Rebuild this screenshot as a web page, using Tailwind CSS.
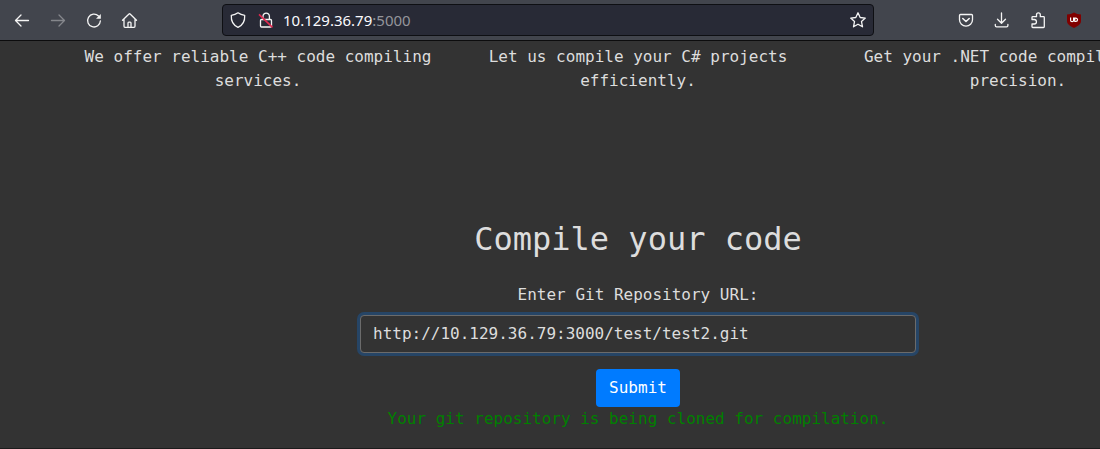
<!DOCTYPE html>
<html lang="en">
<head>
  <meta charset="UTF-8" />
  <meta name="viewport" content="width=device-width, initial-scale=1.0" />
  <title>Compiled</title>
  <script src="https://cdn.jsdelivr.net/npm/@tailwindcss/browser@4"></script>
</head>
<body class="bg-[#333333] text-[#dddddd] font-['DejaVu_Sans_Mono',monospace] overflow-hidden min-h-screen flex flex-col">

  <!-- Browser toolbar -->
  <header class="bg-[#42454d] border-b border-[#0c0c0d] h-[41px] pl-3 pr-4 flex items-center shrink-0 text-[#f5f5f5]">
    <nav class="flex gap-4">
      <button type="button" aria-label="Back" class="size-5">
        <svg viewBox="0 0 20 20" class="size-5" fill="none" stroke="currentColor" stroke-width="1.3" stroke-linecap="round" stroke-linejoin="round"><path d="M16.5 10.5H3.5M9 5l-5.5 5.5L9 16" /></svg>
      </button>
      <button type="button" aria-label="Forward" class="size-5 text-[#85878c]">
        <svg viewBox="0 0 20 20" class="size-5" fill="none" stroke="currentColor" stroke-width="1.3" stroke-linecap="round" stroke-linejoin="round"><path d="M3.5 10.5h13M11 5l5.5 5.5L11 16" /></svg>
      </button>
      <button type="button" aria-label="Reload" class="size-5">
        <svg viewBox="0 0 20 20" class="size-5" fill="none" stroke="currentColor" stroke-width="1.3" stroke-linecap="round"><path d="M14.5 6a6.4 6.4 0 1 0 1.9 4.8" /><path d="M16.8 4v4.8h-4.8z" fill="currentColor" stroke="none" /></svg>
      </button>
      <button type="button" aria-label="Home" class="size-5">
        <svg viewBox="0 0 20 20" class="size-5" fill="none" stroke="currentColor" stroke-width="1.3" stroke-linecap="round" stroke-linejoin="round"><path d="M2.5 10.3 9 4a.8.8 0 0 1 1.1 0l6.4 6.3M4 9.3v7c0 .6.4 1 1 1h9c.6 0 1-.4 1-1v-7M8 17v-4c0-.5.4-.9.9-.9h1.2c.5 0 .9.4.9.9v4" /></svg>
      </button>
    </nav>

    <!-- Address bar -->
    <div class="flex-1 mx-[82px] h-8 px-[5px] bg-[#282a36] border border-[#0e0f13] rounded flex items-center">
      <svg viewBox="0 0 20 20" class="size-5 mr-2" fill="none" stroke="currentColor" stroke-width="1.3" stroke-linejoin="round"><path d="M10 2.800c1.900 1.500 4.200 2.300 6.700 2.500.3 5.200-1.700 9.900-6.700 12-5-2.100-7-6.800-6.700-12 2.500-.2 4.800-1 6.700-2.500z" /></svg>
      <svg viewBox="0 0 20 20" class="size-5 mr-2" fill="none" stroke="currentColor" stroke-width="1.3"><rect x="4.500" y="9.500" width="11" height="7.500" rx="1" /><path d="M7 9.500V6.300a3.200 3.200 0 0 1 6.400 0v3.200" /><path d="M3 4.300 16.500 17.300" stroke="#e22850" stroke-width="1.600" /></svg>
      <p class="flex-1 font-['Noto_Sans',sans-serif] text-[15px] leading-6 text-[#fbfbfe]"><span class="-ml-px">10.129.36.79</span><span class="text-[#94959b]">:5000</span></p>
      <button type="button" aria-label="Bookmark" class="size-5">
        <svg viewBox="0 0 20 20" class="size-5" fill="none" stroke="currentColor" stroke-width="1.3" stroke-linejoin="round"><path d="m10 2.800 2.200 4.700 5.100.6-3.800 3.500 1 5.200-4.500-2.600-4.500 2.600 1-5.200-3.800-3.500 5.100-.6z" /></svg>
      </button>
    </div>

    <div class="flex gap-4">
      <button type="button" aria-label="Save to Pocket" class="size-5">
        <svg viewBox="0 0 20 20" class="size-5" fill="none" stroke="currentColor" stroke-width="1.3" stroke-linecap="round" stroke-linejoin="round"><path d="M4.500 4.500h11c.7 0 1 .4 1 1v4.200a6.500 6.500 0 0 1-13 0V5.500c0-.6.300-1 1-1z" /><path d="m6.800 8.500 3.200 3 3.200-3" stroke-width="1.600" /></svg>
      </button>
      <button type="button" aria-label="Downloads" class="size-5">
        <svg viewBox="0 0 20 20" class="size-5" fill="none" stroke="currentColor" stroke-width="1.3" stroke-linecap="round" stroke-linejoin="round"><path d="M9.500 3v10M5.500 9.300l4 4 4-4M3.300 14.500v1c0 .8.500 1.300 1.300 1.300h10c.8 0 1.300-.5 1.300-1.300v-1" /></svg>
      </button>
      <button type="button" aria-label="Extensions" class="size-5">
        <svg viewBox="0 0 20 20" class="size-5" fill="none" stroke="currentColor" stroke-width="1.3" stroke-linejoin="round"><path d="M4 9.500V7.500c0-.5.300-.8.800-.8h3.700V4.800a1.900 1.900 0 0 1 3.800 0v1.900h3.200c.5 0 .8.300.8.800v9.200c0 .5-.3.800-.8.800H4.800c-.5 0-.8-.3-.8-.8V14h2.200a2.200 2.200 0 0 0 0-4.500z" /></svg>
      </button>
      <button type="button" aria-label="uBlock Origin" class="size-5">
        <svg viewBox="0 0 20 20" class="size-5"><path d="M10 2.500c2 1.300 4.500 2 7 2v6.500c0 3.200-3 5-7 7-4-2-7-3.800-7-7V4.500c2.500 0 5-.7 7-2z" fill="#800000" /><path d="M6.600 7.600v2.600a1.500 1.500 0 0 0 3 0V7.600M10.800 8.100v3.400h1a1.700 1.700 0 0 0 0-3.400z" fill="none" stroke="#ffffff" stroke-width="1.200" /></svg>
      </button>
    </div>
  </header>

  <!-- Page content, wider than the viewport -->
  <main class="w-[116%] flex-1 pt-1">
    <section class="max-w-[1140px] mx-auto grid grid-cols-3 text-center text-base leading-6">
      <p class="px-[15px]">We offer reliable C++ code compiling services.</p>
      <p class="px-[15px]">Let us compile your C# projects efficiently.</p>
      <p class="px-[15px]">Get your .NET code compiled with precision.</p>
    </section>

    <section class="max-w-[1140px] mx-auto mt-32 text-center">
      <h1 class="text-[32px] leading-9">Compile your code</h1>
      <form class="max-w-[556px] mx-auto mt-[26px]">
        <label for="repo_url" class="block leading-6 mb-2">Enter Git Repository URL:</label>
        <input id="repo_url" type="text" value="http://10.129.36.79:3000/test/test2.git" class="block w-full h-[38px] px-3 pb-[2px] bg-[#333333] border border-[#6b6b6b] rounded ring-3 ring-[#264566] outline-none" />
        <button type="submit" class="mt-4 h-[38px] px-[13px] bg-[#007bff] text-white rounded block mx-auto">Submit</button>
      </form>
      <p class="leading-6 text-[#008000]">Your git repository is being cloned for compilation.</p>
    </section>
  </main>

  <div class="h-px bg-[#1c1c1c]"></div>

</body>
</html>
